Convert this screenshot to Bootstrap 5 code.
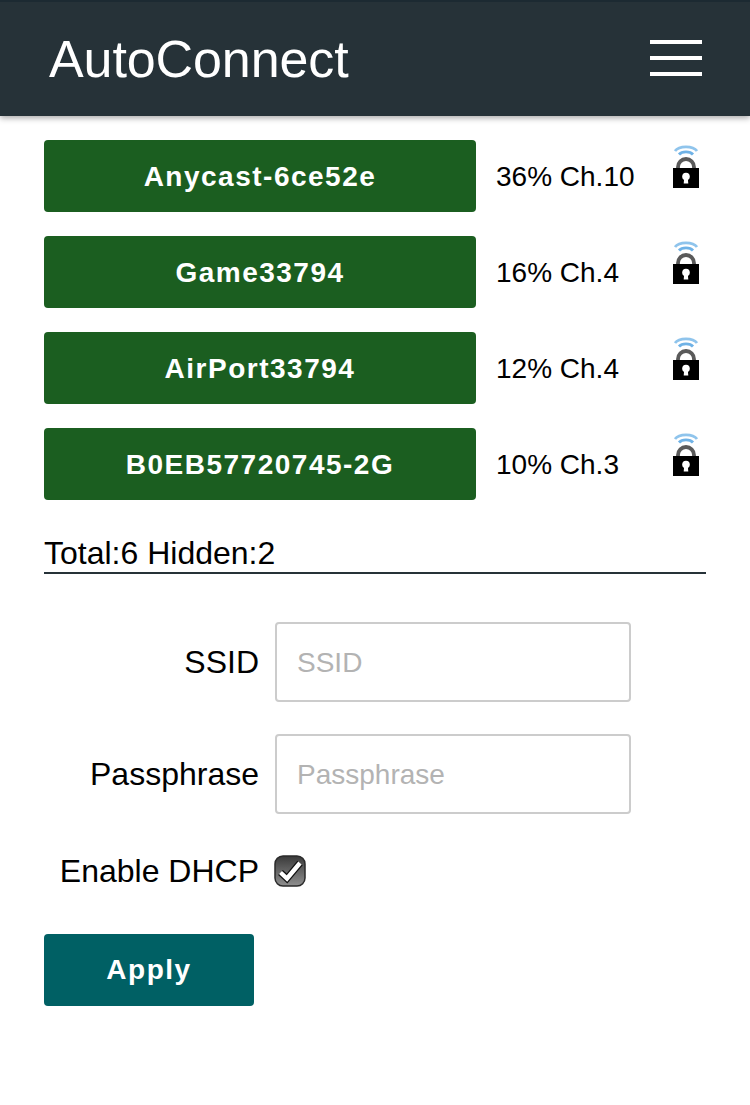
<!DOCTYPE html>
<html lang="en">
<head>
<meta charset="utf-8">
<title>AutoConnect</title>
<link href="https://cdn.jsdelivr.net/npm/bootstrap@5.3.0/dist/css/bootstrap.min.css" rel="stylesheet">
<style>
html,body{margin:0;background:#fff;color:#000;font-family:"Liberation Sans",Arial,sans-serif}
.ac-head{height:116px;background:#263238;border-top:2px solid #1c2a32;box-shadow:0 2px 6px rgba(0,0,0,.35);padding:0 48px 0 49px}
.ac-title{font-size:52px;line-height:1;color:#fff;letter-spacing:-.1px}
.ac-burger{width:52px;height:36px;margin-top:-2px}
.ac-burger i{display:block;height:4px;background:#fff}
.ac-main{padding:24px 44px 0}
.ac-row{height:72px;margin-bottom:24px}
.ac-ssid{width:432px;height:72px;background:#1b5e20;color:#fff;border:0;border-radius:4px;font-weight:700;font-size:28px;letter-spacing:1.5px;padding:2px 0 0;line-height:70px}
.ac-ssid:hover,.ac-ssid:active{background:#1b5e20!important;color:#fff!important}
.ac-sig{font-size:28px;width:172px;padding:2px 0 0 20px;white-space:nowrap;line-height:1}
.ac-lock{width:36px;height:44px;margin-left:20px;margin-top:-20px}
.ac-total{font-size:32px;line-height:36px;border-bottom:2px solid #263238;height:50px;padding-top:11px}
.ac-total span{display:block}
.ac-form{margin-top:48px}
.ac-lab{width:215px;text-align:right;font-size:32px;line-height:1}
.ac-field{height:80px;margin-bottom:32px}
.ac-inp{width:356px;height:80px;margin-left:16px;border:2px solid #ccc;border-radius:4px;padding:2px 20px 0;font-size:28px;color:#000;font-family:inherit;font-weight:300}
.ac-inp::placeholder{color:#b3b3b3;opacity:1}
.ac-chk{height:49px;padding-top:1px}
.ac-box{width:32px;height:32px;margin-left:15px;display:block}
.ac-apply{display:block;width:210px;height:72px;background:#006064;color:#fff;border:0;border-radius:4px;font-weight:700;font-size:28px;letter-spacing:1.5px;padding:0;margin-top:39px}
.ac-apply:hover,.ac-apply:active{background:#006064!important;color:#fff!important}
</style>
</head>
<body>
<header class="ac-head d-flex justify-content-between align-items-center">
  <div class="ac-title">AutoConnect</div>
  <div class="ac-burger d-flex flex-column justify-content-between"><i></i><i></i><i></i></div>
</header>
<main class="ac-main">
  <div class="ac-row d-flex align-items-center"><button class="btn ac-ssid">Anycast-6ce52e</button><span class="ac-sig">36% Ch.10</span><svg class="ac-lock" viewBox="0 0 36 44"><use href="#lk"/></svg></div>
  <div class="ac-row d-flex align-items-center"><button class="btn ac-ssid">Game33794</button><span class="ac-sig">16% Ch.4</span><svg class="ac-lock" viewBox="0 0 36 44"><use href="#lk"/></svg></div>
  <div class="ac-row d-flex align-items-center"><button class="btn ac-ssid">AirPort33794</button><span class="ac-sig">12% Ch.4</span><svg class="ac-lock" viewBox="0 0 36 44"><use href="#lk"/></svg></div>
  <div class="ac-row d-flex align-items-center"><button class="btn ac-ssid">B0EB57720745-2G</button><span class="ac-sig">10% Ch.3</span><svg class="ac-lock" viewBox="0 0 36 44"><use href="#lk"/></svg></div>
  <div class="ac-total"><span>Total:6 Hidden:2</span></div>
  <form class="ac-form">
    <div class="ac-field d-flex align-items-center"><label class="ac-lab" for="s">SSID</label><input id="s" class="ac-inp" placeholder="SSID"></div>
    <div class="ac-field d-flex align-items-center"><label class="ac-lab" for="p">Passphrase</label><input id="p" class="ac-inp" placeholder="Passphrase"></div>
    <div class="ac-chk d-flex align-items-center"><span class="ac-lab">Enable DHCP</span>
      <svg class="ac-box" viewBox="0 0 32 32"><defs><linearGradient id="g" x1="0" y1="0" x2="0" y2="1"><stop offset="0" stop-color="#3a3a3a"/><stop offset="1" stop-color="#8f8f8f"/></linearGradient></defs><rect x="1" y="1" width="30" height="30" rx="8" fill="url(#g)" stroke="#2a2a2a" stroke-width="1.5"/><path d="M6.500 17.500l6.500 6L26 8" fill="none" stroke="#111" stroke-width="7"/><path d="M6.500 17.500l6.500 6L26 8" fill="none" stroke="#fff" stroke-width="4.400"/></svg>
    </div>
    <button type="button" class="btn ac-apply">Apply</button>
  </form>
</main>
<svg width="0" height="0" class="d-block"><defs><g id="lk">
  <path d="M11 10.500C14 7 22 7 25 10.500" fill="none" stroke="#6fb2e6" stroke-width="2.800"/>
  <path d="M7 7C11 1.500 25 1.500 29 7" fill="none" stroke="#8fc4ec" stroke-width="2.800"/>
  <path d="M10 25v-2a8 8 0 0 1 16 0V25" fill="none" stroke="#5a5a5a" stroke-width="3.800"/>
  <rect x="5" y="24" width="26" height="20" fill="#000"/>
  <circle cx="18" cy="32.500" r="3.800" fill="#fff"/><path d="M16.300 33h3.400l.6 6.500h-4.600z" fill="#fff"/>
</g></defs></svg>
<script src="https://cdn.jsdelivr.net/npm/bootstrap@5.3.0/dist/js/bootstrap.bundle.min.js"></script>
</body>
</html>
